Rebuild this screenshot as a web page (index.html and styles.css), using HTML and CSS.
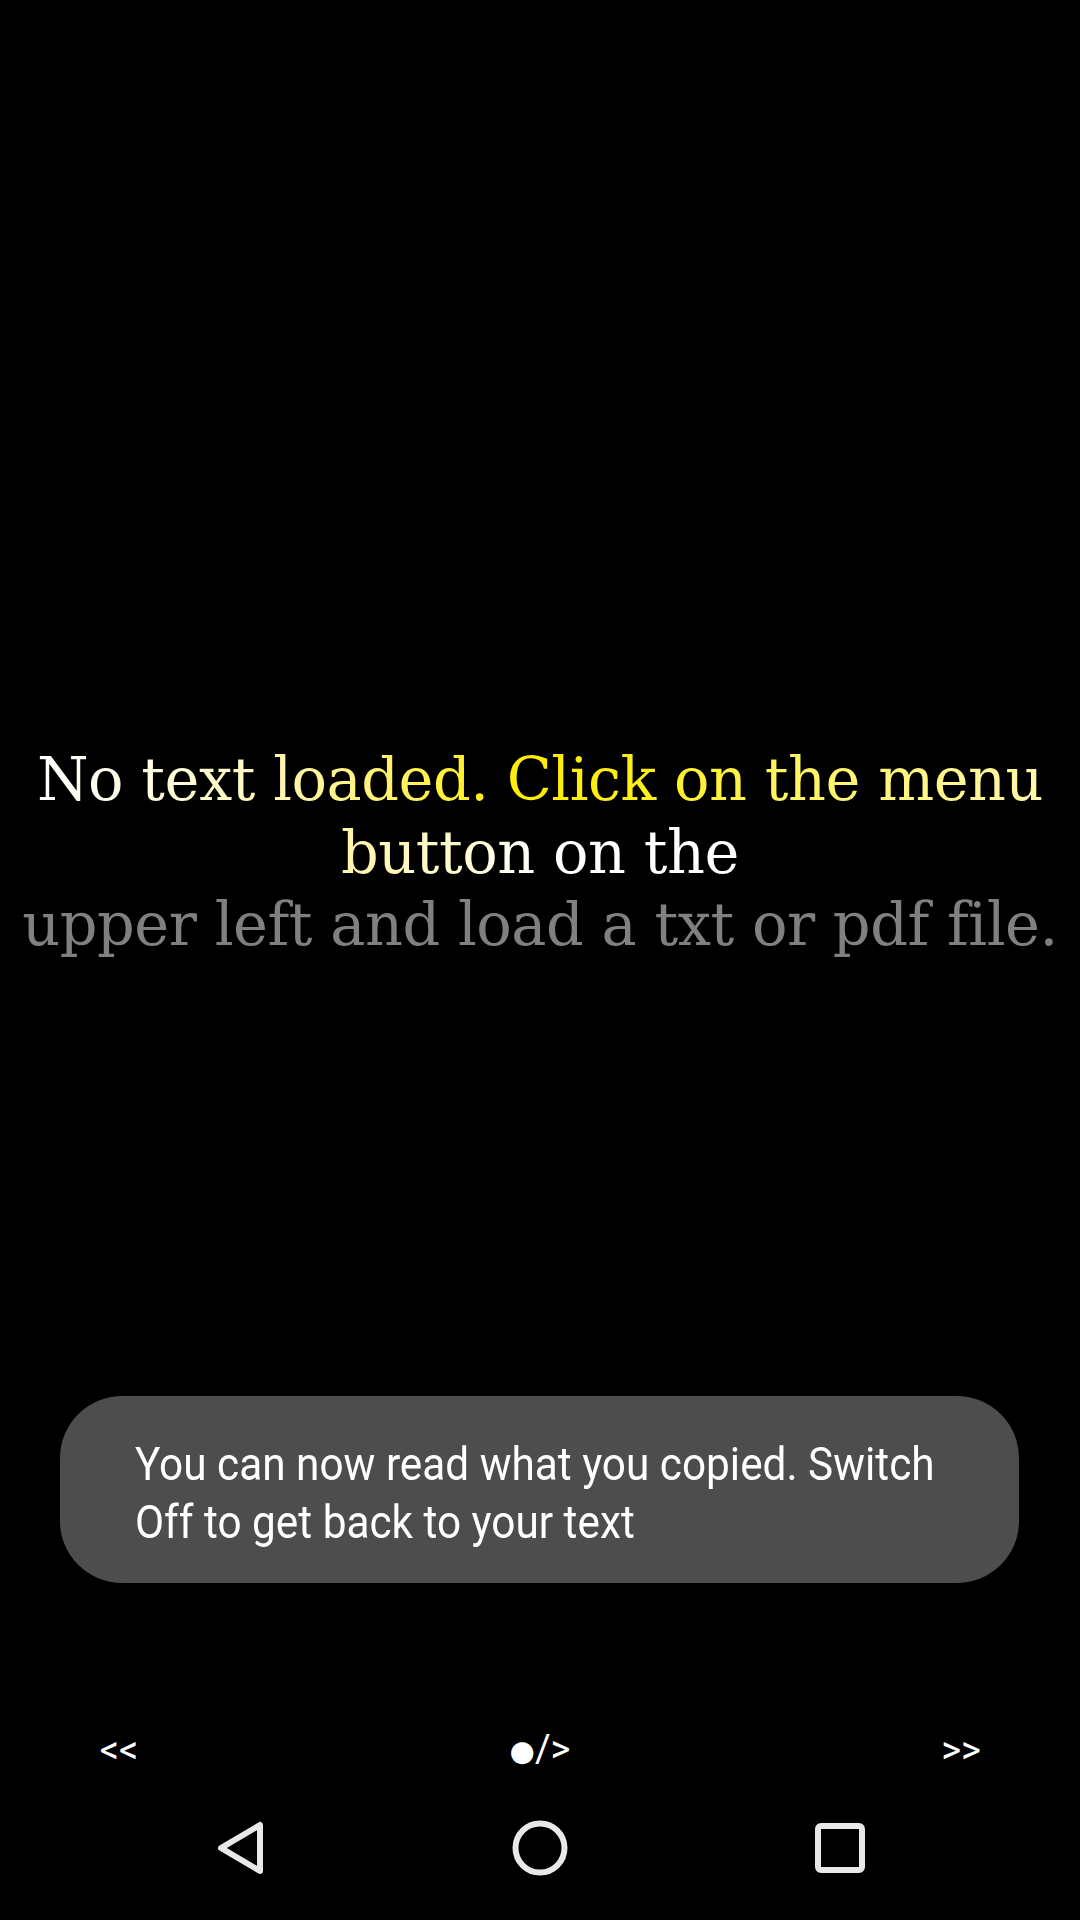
FILE: index.html
```html
<!DOCTYPE html>
<html lang="en">
<head>
<meta charset="utf-8">
<title>Reader</title>
<link rel="stylesheet" href="styles.css">
</head>
<body>
<div class="screen">
  <main class="reader">
    <div class="message">
      <span class="line line-1">No text loaded. Click on the menu</span>
      <span class="line line-2">button on the</span>
      <span class="line line-3">upper left and load a txt or pdf file.</span>
    </div>
    <div class="toast">
      <p class="toast-text">You can now read what you copied. Switch Off to get back to your text</p>
    </div>
  </main>
  <div class="controls">
    <button class="ctl">&lt;&lt;</button>
    <button class="ctl"><span class="dot">&#9679;</span>/&gt;</button>
    <button class="ctl">&gt;&gt;</button>
  </div>
  <nav class="navbar">
    <svg class="nav-icon" viewBox="0 0 72 72" aria-label="Back">
      <polygon points="56,13 56,59 17,36" />
    </svg>
    <svg class="nav-icon" viewBox="0 0 72 72" aria-label="Home">
      <circle cx="36" cy="36" r="24.5" />
    </svg>
    <svg class="nav-icon" viewBox="0 0 72 72" aria-label="Recents">
      <rect x="14" y="14" width="44" height="44" rx="3" />
    </svg>
  </nav>
</div>
</body>
</html>
```
FILE: styles.css
```css
html, body {
  margin: 0;
  padding: 0;
  background: #000;
}

.screen {
  width: 1080px;
  height: 1920px;
  display: flex;
  flex-direction: column;
  background: #000;
  overflow: hidden;
}

.reader {
  position: relative;
  height: 1714px;
  box-sizing: border-box;
  padding-bottom: 8px;
  display: flex;
  align-items: center;
  justify-content: center;
}

.message {
  display: flex;
  flex-direction: column;
  align-items: center;
  font-family: "DejaVu Serif", "Liberation Serif", serif;
  font-size: 59px;
  letter-spacing: -0.5px;
  line-height: 72.5px;
  white-space: nowrap;
}

.line {
  display: block;
  color: #ffffff;
  -webkit-text-fill-color: transparent;
  -webkit-background-clip: text;
  background-clip: text;
}

.line-1 {
  background-image: linear-gradient(90deg, #ffffff 0%, #fffde8 8%, #fff9c4 20%, #fff27a 33%, #ffee00 48%, #ffee10 58%, #fff460 75%, #fff8a8 100%);
}

.line-2 {
  background-image: linear-gradient(90deg, #fff6a8 0%, #fffad0 30%, #ffffff 50%, #ffffff 100%);
}

.line-3 {
  color: #808080;
  -webkit-text-fill-color: #808080;
  background: none;
}

.toast {
  position: absolute;
  left: 60px;
  top: 1396px;
  width: 959px;
  height: 187px;
  box-sizing: border-box;
  padding: 40px 0 0 75px;
  background: #4d4d4d;
  border-radius: 62px;
  overflow: hidden;
}

.toast-text {
  margin: 0;
  width: 900px;
  transform: scaleX(0.92);
  transform-origin: left top;
  font-family: Roboto, "Noto Sans", sans-serif;
  font-size: 46px;
  line-height: 57.5px;
  color: #ffffff;
}

.controls {
  height: 62px;
  box-sizing: border-box;
  padding: 10px 59px 0;
  display: flex;
  align-items: center;
  justify-content: space-between;
}

.ctl {
  width: 120px;
  padding: 0;
  border: 0;
  background: transparent;
  color: #ffffff;
  font-family: Roboto, "DejaVu Sans", sans-serif;
  font-size: 38px;
  line-height: 44px;
  text-align: center;
}

.dot {
  font-family: "DejaVu Sans", sans-serif;
  font-size: 29px;
  vertical-align: 1px;
}

.navbar {
  height: 144px;
  display: flex;
  align-items: center;
  justify-content: center;
  gap: 228px;
}

.nav-icon {
  width: 72px;
  height: 72px;
  fill: none;
  stroke: #e8e8e8;
  stroke-width: 6;
  stroke-linejoin: round;
}
```
